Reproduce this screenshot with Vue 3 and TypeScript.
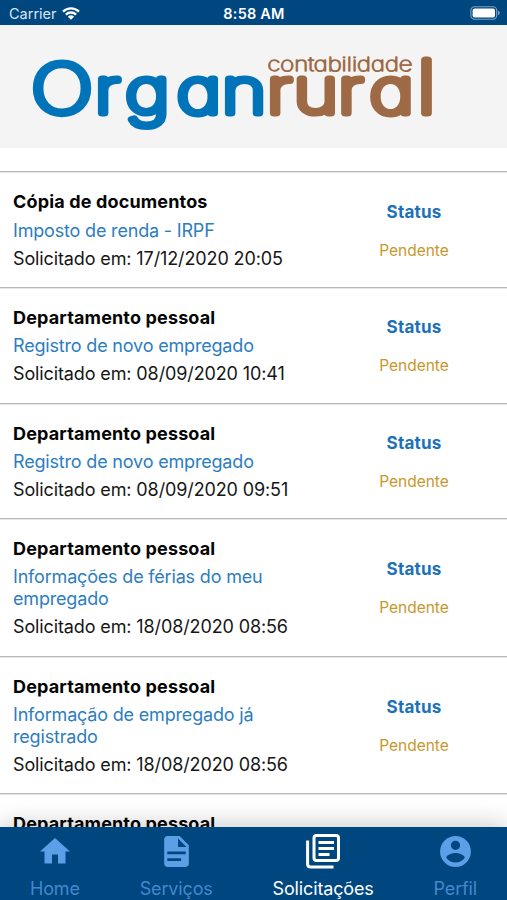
<script setup lang="ts">
interface Solicitacao {
  categoria: string
  assunto: string
  data: string
  status: string
}

interface Aba {
  nome: string
  icone: 'home' | 'doc' | 'lista' | 'perfil'
}

const solicitacoes: Solicitacao[] = [
  { categoria: 'Cópia de documentos', assunto: 'Imposto de renda - IRPF', data: '17/12/2020 20:05', status: 'Pendente' },
  { categoria: 'Departamento pessoal', assunto: 'Registro de novo empregado', data: '08/09/2020 10:41', status: 'Pendente' },
  { categoria: 'Departamento pessoal', assunto: 'Registro de novo empregado', data: '08/09/2020 09:51', status: 'Pendente' },
  { categoria: 'Departamento pessoal', assunto: 'Informações de férias do meu empregado', data: '18/08/2020 08:56', status: 'Pendente' },
  { categoria: 'Departamento pessoal', assunto: 'Informação de empregado já registrado', data: '18/08/2020 08:56', status: 'Pendente' },
  { categoria: 'Departamento pessoal', assunto: '', data: '', status: '' },
]

const abas: Aba[] = [
  { nome: 'Home', icone: 'home' },
  { nome: 'Serviços', icone: 'doc' },
  { nome: 'Solicitações', icone: 'lista' },
  { nome: 'Perfil', icone: 'perfil' },
]

const ativa = 'Solicitações'
</script>

<template>
  <div class="app">
    <header class="statusbar">
      <div class="carrier">
        <span>Carrier</span>
        <svg class="wifi" viewBox="0 0 18 13" width="18" height="13">
          <path d="M1 4.6a11.6 11.6 0 0 1 16 0" />
          <path d="M3.9 7.6a7.4 7.4 0 0 1 10.2 0" />
          <path class="dot" d="M5.9 9.7a4.6 4.6 0 0 1 6.2 0L9 12.8Z" />
        </svg>
      </div>
      <span class="clock">8:58 AM</span>
      <svg class="battery" viewBox="0 0 31 14" width="31" height="14">
        <rect class="shell" x="0.9" y="0.8" width="25.8" height="12.4" rx="3.6" />
        <rect class="charge" x="2.6" y="2.5" width="22.4" height="9" rx="2" />
        <path class="cap" d="M28 4.8q1.8.6 1.8 2.2t-1.8 2.2z" />
      </svg>
    </header>

    <div class="brand">
      <svg viewBox="0 0 507 123" width="507" height="123">
        <g transform="scale(1.22 1)">
          <text class="organ" x="25.7 77.9 102.8 145 182" y="88"><tspan class="capital">O</tspan>rgan</text>
          <text class="rural" x="218.9 240.8 277.2 303 341.8" y="88">rura<tspan class="tall">l</tspan></text>
        </g>
        <text class="tagline" x="267.5" y="46" textLength="145" lengthAdjust="spacingAndGlyphs">contabilidade</text>
      </svg>
    </div>

    <main class="list">
      <article v-for="(s, i) in solicitacoes" :key="i" class="row">
        <div class="info">
          <h2>{{ s.categoria }}</h2>
          <p class="subject">{{ s.assunto }}</p>
          <p v-if="s.data" class="date">Solicitado em: {{ s.data }}</p>
        </div>
        <div v-if="s.status" class="state">
          <strong>Status</strong>
          <span>{{ s.status }}</span>
        </div>
      </article>
    </main>

    <nav class="tabs">
      <button v-for="a in abas" :key="a.nome" class="tab" :class="{ active: a.nome === ativa }">
        <svg v-if="a.icone === 'home'" viewBox="0 0 24 24" width="36" height="36">
          <path d="M10 20v-6h4v6h5v-8h3L12 3 2 12h3v8z" />
        </svg>
        <svg v-else-if="a.icone === 'doc'" viewBox="0 0 24 24" width="37" height="37">
          <path fill-rule="evenodd" d="M14 2H6c-1.1 0-2 .9-2 2v16c0 1.1.9 2 2 2h12c1.1 0 2-.9 2-2V8zM13 3.5 18.5 9H13zM6 12h12v1.8H6zM6 16.4h9v1.8H6z" />
        </svg>
        <svg v-else-if="a.icone === 'lista'" viewBox="0 0 34 35" width="34" height="35">
          <rect class="line" x="8" y="1.5" width="24.5" height="25" rx="2.5" />
          <path class="line" d="M1.6 6.5V30q0 3 3 3H27.5" />
          <path class="line" d="M12.5 8.5h15.500M12.5 14.5h15.500M12.5 20.5h11" />
        </svg>
        <svg v-else viewBox="0 0 24 24" width="37" height="37">
          <path fill-rule="evenodd" d="M12 2a10 10 0 1 0 0 20a10 10 0 1 0 0-20zM12 5a3 3 0 1 1 0 6a3 3 0 1 1 0-6zM12 19.2c-2.5 0-4.71-1.28-6-3.22.03-1.99 4-3.08 6-3.08s5.97 1.09 6 3.08c-1.29 1.94-3.5 3.22-6 3.22z" />
        </svg>
        <span>{{ a.nome }}</span>
      </button>
    </nav>
  </div>
</template>

<style>
body {
  background: #fff;
  overflow: hidden;
}
</style>

<style scoped>
.app {
  width: 507px;
  height: 900px;
  display: flex;
  flex-direction: column;
  overflow: hidden;
  background: #fff;
  font-family: Inter, 'Liberation Sans', sans-serif;
}

.statusbar {
  height: 25px;
  flex: none;
  display: grid;
  grid-template-columns: 1fr auto 1fr;
  align-items: center;
  padding: 1px 6px 0 9px;
  box-sizing: border-box;
  background: #00467f;
  color: #fff;
  font-size: 14.5px;
}

.carrier {
  display: flex;
  align-items: center;
  gap: 6px;
  color: #d9e6f2;
}

.wifi {
  margin-left: -1px;
}

.wifi path {
  fill: none;
  stroke: #fff;
  stroke-width: 2.4;
}

.wifi .dot {
  fill: #fff;
  stroke: none;
}

.clock {
  font-weight: 600;
  font-size: 14.5px;
  letter-spacing: 0.2px;
  margin-left: -2px;
}

.battery {
  justify-self: end;
}

.shell {
  fill: none;
  stroke: #7fa3c2;
  stroke-width: 1.1;
}

.charge {
  fill: #fff;
}

.cap {
  fill: #7fa3c2;
}

.brand {
  height: 123px;
  flex: none;
  background: #f4f4f4;
}

.brand svg {
  display: block;
}

.brand text {
  font-family: Inter, sans-serif;
  font-feature-settings: 'cv11' 1;
  stroke-linejoin: round;
  stroke-linecap: round;
}

.organ,
.rural {
  font-size: 62px;
  font-weight: 100;
  stroke-width: 7.2;
}

.capital {
  font-size: 67.5px;
}

.tall {
  font-size: 72px;
}

.organ {
  fill: #0073b9;
  stroke: #0073b9;
}

.rural {
  fill: #9e6a45;
  stroke: #9e6a45;
}

.tagline {
  font-size: 18.5px;
  font-weight: 100;
  fill: #9e6a45;
  stroke: #9e6a45;
  stroke-width: 1.3;
}

.list {
  flex: 1;
  min-height: 0;
  overflow: hidden;
  padding-top: 23.4px;
}

.row {
  display: flex;
  align-items: center;
  box-sizing: border-box;
  padding: 19px 0 17.2px 13px;
  border-top: 1.4px solid #b9b9b9;
  box-shadow: inset 0 1px 0 #e6e6e6;
}

.info {
  width: 308px;
  display: flex;
  flex-direction: column;
  gap: 6.2px;
}

h2,
p {
  margin: 0;
  min-height: 22px;
  font-size: 18px;
  line-height: 22px;
  letter-spacing: -0.14px;
}

h2 {
  color: #050505;
  font-weight: 700;
  letter-spacing: 0.15px;
}

.subject {
  color: #2d7dbf;
  max-width: 270px;
  letter-spacing: -0.18px;
}

.date {
  color: #161616;
  letter-spacing: -0.12px;
}

.state {
  flex: 1;
  display: flex;
  flex-direction: column;
  align-items: center;
  gap: 19px;
}

.state strong {
  color: #1c71b8;
  font-size: 17px;
  line-height: 20px;
  letter-spacing: 0.2px;
}

.state span {
  color: #c8972c;
  font-size: 15.5px;
  line-height: 19px;
}

.tabs {
  height: 73px;
  flex: none;
  position: relative;
  display: flex;
  justify-content: space-around;
  background: #00467f;
  box-shadow: 0 -3px 24px rgba(0, 0, 0, 0.2);
}

.tab {
  display: flex;
  flex-direction: column;
  align-items: center;
  padding: 6px 0 0;
  border: 0;
  background: none;
  color: #5b9fe6;
  font-family: inherit;
  font-size: 18px;
  letter-spacing: -0.14px;
}

.tab svg {
  height: 37px;
  fill: currentColor;
}

.tab .line {
  fill: none;
  stroke: currentColor;
  stroke-width: 3;
}

.tab span {
  margin-top: 8px;
  line-height: 22px;
  opacity: 0.75;
}

.tab.active {
  color: #fff;
}

.tab.active span {
  opacity: 1;
}
</style>
